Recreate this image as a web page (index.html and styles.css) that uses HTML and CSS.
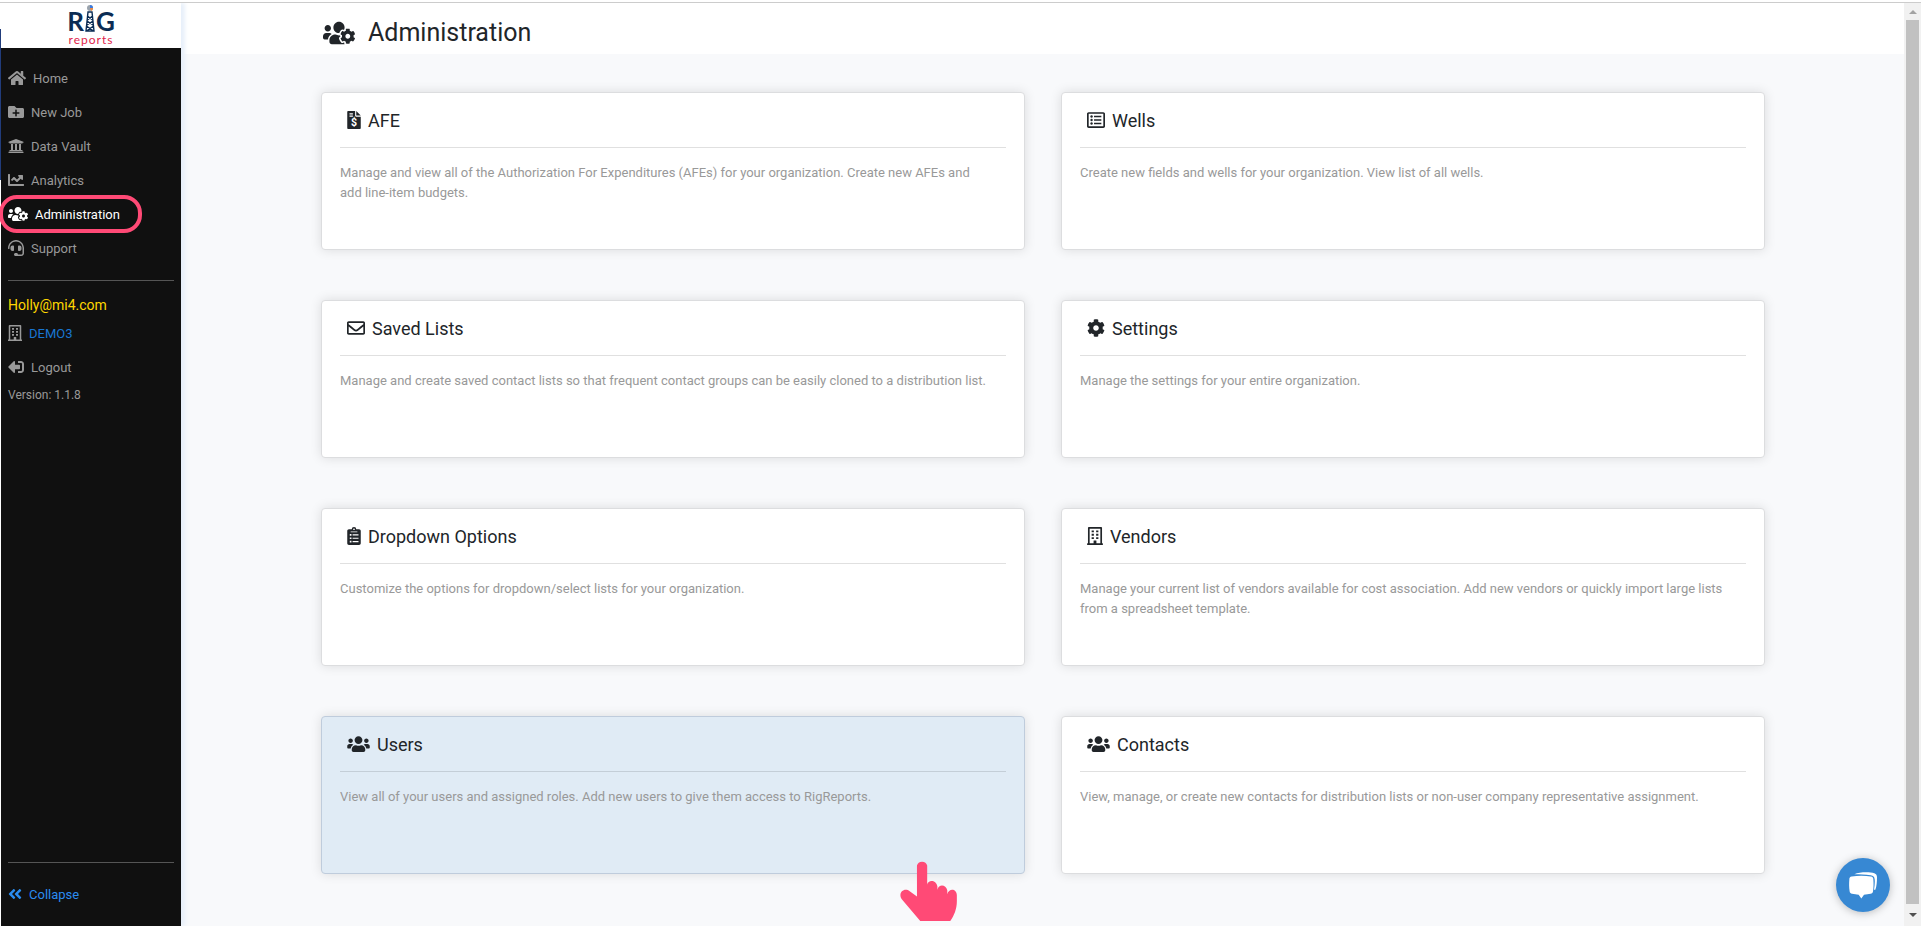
FILE: index.html
```
<!DOCTYPE html>
<html lang="en">
<head>
    <meta charset="UTF-8">
    <meta name="viewport" content="width=device-width, initial-scale=1.0">
    <title>Administration - Rig Reports</title>
    <link rel="stylesheet" href="styles.css">
</head>
<body>
    <!-- shared icons -->
    <svg class="sprite" aria-hidden="true">
        <symbol id="users-cog" viewBox="0 0 640 512">
            <path d="M610.5 341.3c2.6-14.1 2.6-28.5 0-42.6l25.8-14.9c3-1.7 4.3-5.2 3.3-8.5-6.7-21.6-18.2-41.2-33.2-57.4-2.3-2.5-6-3.1-9-1.4l-25.8 14.9c-10.9-9.3-23.4-16.5-36.9-21.3v-29.8c0-3.4-2.4-6.4-5.7-7.1-22.3-5-45-4.8-66.2 0-3.3.7-5.7 3.7-5.7 7.1v29.8c-13.5 4.8-26 12-36.9 21.3l-25.8-14.9c-2.9-1.7-6.7-1.1-9 1.4-15 16.2-26.5 35.8-33.2 57.4-1 3.3.4 6.8 3.3 8.5l25.8 14.9c-2.6 14.1-2.6 28.5 0 42.6l-25.8 14.9c-3 1.7-4.3 5.2-3.3 8.5 6.7 21.6 18.2 41.1 33.2 57.4 2.3 2.5 6 3.1 9 1.4l25.8-14.9c10.9 9.3 23.4 16.5 36.9 21.3v29.8c0 3.4 2.4 6.4 5.7 7.1 22.3 5 45 4.8 66.2 0 3.3-.7 5.7-3.7 5.7-7.1v-29.8c13.5-4.8 26-12 36.9-21.3l25.8 14.9c2.9 1.7 6.7 1.1 9-1.4 15-16.2 26.5-35.8 33.2-57.4 1-3.3-.4-6.8-3.3-8.5l-25.8-14.9zM496 368.5c-26.8 0-48.5-21.8-48.5-48.5s21.8-48.5 48.5-48.5 48.5 21.8 48.5 48.5-21.7 48.5-48.5 48.5zM96 224c35.3 0 64-28.7 64-64s-28.7-64-64-64-64 28.7-64 64 28.7 64 64 64zm224 32c1.9 0 3.7-.5 5.6-.6 8.3-21.7 20.5-42.1 36.3-59.2 7.4-8 17.9-12.6 28.9-12.6 6.9 0 13.7 1.8 19.6 5.3l7.9 4.6c.8-.5 1.6-.9 2.4-1.4 7-14.6 11.2-30.8 11.2-48 0-61.9-50.1-112-112-112S208 82.1 208 144c0 61.9 50.1 112 112 112zm105.2 194.5c-2.3-1.2-4.6-2.6-6.8-3.9-8.2 4.8-15.3 9.8-27.5 9.8-10.9 0-21.4-4.6-28.9-12.6-18.3-19.8-32.3-43.9-40.2-69.6-10.7-34.5 24.9-49.7 25.8-50.3-.1-2.6-.1-5.2 0-7.8l-7.9-4.6c-3.8-2.2-7-5-9.8-8.1-3.3.2-6.5.6-9.8.6-24.6 0-47.6-6-68.5-16h-8.3C179.6 288 128 339.6 128 403.2V432c0 26.5 21.5 48 48 48h255.4c-3.7-6-6.2-12.8-6.2-20.3v-9.2zM173.1 274.6C161.5 263.1 145.6 256 128 256H64c-35.3 0-64 28.7-64 64v32c0 17.7 14.3 32 32 32h65.9c6.3-47.4 34.9-87.3 75.2-109.4z"/>
        </symbol>
        <symbol id="users" viewBox="0 0 640 512">
            <path d="M96 224c35.3 0 64-28.7 64-64s-28.7-64-64-64-64 28.7-64 64 28.7 64 64 64zm448 0c35.3 0 64-28.7 64-64s-28.7-64-64-64-64 28.7-64 64 28.7 64 64 64zm32 32h-64c-17.6 0-33.5 7.1-45.1 18.6 40.3 22.1 68.9 62 75.1 109.4h66c17.7 0 32-14.3 32-32v-32c0-35.3-28.7-64-64-64zm-256 0c61.9 0 112-50.1 112-112S381.9 32 320 32 208 82.1 208 144s50.1 112 112 112zm76.8 32h-8.3c-20.8 10-43.9 16-68.5 16s-47.6-6-68.5-16h-8.3C179.6 288 128 339.6 128 403.2V432c0 26.5 21.5 48 48 48h288c26.5 0 48-21.5 48-48v-28.8c0-63.6-51.6-115.2-115.2-115.2zm-223.7-13.4C161.5 263.1 145.6 256 128 256H64c-35.3 0-64 28.7-64 64v32c0 17.7 14.3 32 32 32h65.9c6.3-47.4 34.9-87.3 75.2-109.4z"/>
        </symbol>
        <symbol id="building" viewBox="0 0 448 512">
            <path fill-rule="evenodd" d="M48 0h352c13 0 24 11 24 24v440h12c7 0 12 5 12 12v36H0v-36c0-7 5-12 12-12h12V24C24 11 35 0 48 0zM72 48v416h112v-68c0-7 5-12 12-12h56c7 0 12 5 12 12v68h112V48z"/>
            <path d="M128 96h64v56h-64zM256 96h64v56h-64zM128 192h64v56h-64zM256 192h64v56h-64zM128 288h64v56h-64zM256 288h64v56h-64z"/>
        </symbol>
    </svg>

    <nav class="sidebar">
        <a href="#" class="logo" aria-label="Rig Reports">
            <span class="logo-top">
                <span>R</span>
                <svg class="derrick" viewBox="0 0 10 28" width="10" height="28">
                    <circle cx="5" cy="3" r="3" fill="#9aa3ad"/>
                    <path d="M5 3V0a3 3 0 0 1 3 3z" fill="#3b7be0"/>
                    <path d="M5 3h3a3 3 0 0 1-2 3z" fill="#f08a3c"/>
                    <path d="M3 7h4l2 19H1zM2.500 11l5 4M7.500 11l-5 4M2 16l6 4M8 16l-6 4M1.500 21l7 5M8.500 21l-7 5" fill="none" stroke="#0b2c54" stroke-width="1.400"/>
                </svg>
                <span>G</span>
            </span>
            <span class="logo-bottom">reports</span>
        </a>

        <ul class="menu">
            <li><a href="#"><svg viewBox="0 0 576 512" width="18" height="16"><path d="M280.37 148.26L96 300.11V464a16 16 0 0 0 16 16l112.06-.29a16 16 0 0 0 15.92-16V368a16 16 0 0 1 16-16h64a16 16 0 0 1 16 16v95.64a16 16 0 0 0 16 16.05L464 480a16 16 0 0 0 16-16V300L295.67 148.26a12.19 12.19 0 0 0-15.3 0zM571.6 251.47L488 182.56V44.05a12 12 0 0 0-12-12h-56a12 12 0 0 0-12 12v72.61L318.47 43a48 48 0 0 0-61 0L4.34 251.47a12 12 0 0 0-1.6 16.9l25.5 31A12 12 0 0 0 45.15 301l235.22-193.74a12.19 12.19 0 0 1 15.3 0L530.9 301a12 12 0 0 0 16.9-1.6l25.5-31a12 12 0 0 0-1.7-16.93z"/></svg>Home</a></li>
            <li><a href="#"><svg viewBox="0 0 512 512" width="16" height="16"><path d="M464 128H272l-64-64H48C21.49 64 0 85.49 0 112v288c0 26.51 21.49 48 48 48h416c26.51 0 48-21.49 48-48V176c0-26.51-21.49-48-48-48zm-96 168c0 8.84-7.16 16-16 16h-72v72c0 8.84-7.16 16-16 16h-16c-8.84 0-16-7.16-16-16v-72h-72c-8.84 0-16-7.16-16-16v-16c0-8.84 7.16-16 16-16h72v-72c0-8.84 7.16-16 16-16h16c8.84 0 16 7.16 16 16v72h72c8.84 0 16 7.16 16 16v16z"/></svg>New Job</a></li>
            <li><a href="#"><svg viewBox="0 0 512 512" width="16" height="16"><path d="M496 128v16a8 8 0 0 1-8 8h-24v12c0 6.627-5.373 12-12 12H60c-6.627 0-12-5.373-12-12v-12H24a8 8 0 0 1-8-8v-16a8 8 0 0 1 4.941-7.392l232-88a7.996 7.996 0 0 1 6.118 0l232 88A8 8 0 0 1 496 128zm-24 304H40c-13.255 0-24 10.745-24 24v16a8 8 0 0 0 8 8h464a8 8 0 0 0 8-8v-16c0-13.255-10.745-24-24-24zM96 192v192H60c-6.627 0-12 5.373-12 12v20h416v-20c0-6.627-5.373-12-12-12h-36V192h-64v192h-64V192h-64v192h-64V192H96z"/></svg>Data Vault</a></li>
            <li><a href="#"><svg viewBox="0 0 512 512" width="16" height="16"><path d="M496 384H64V80c0-8.84-7.16-16-16-16H16C7.16 64 0 71.16 0 80v336c0 17.67 14.33 32 32 32h464c8.84 0 16-7.16 16-16v-32c0-8.84-7.16-16-16-16zM464 96H345.94c-21.38 0-32.09 25.85-16.97 40.97l32.4 32.4L288 242.75l-73.37-73.37c-12.5-12.5-32.76-12.5-45.25 0l-68.69 68.69c-6.25 6.25-6.25 16.38 0 22.63l22.62 22.62c6.25 6.25 16.38 6.25 22.63 0L192 237.25l73.37 73.37c12.5 12.5 32.76 12.5 45.25 0l96-96 32.4 32.4c15.12 15.12 40.97 4.41 40.97-16.97V112c.01-8.84-7.15-16-15.99-16z"/></svg>Analytics</a></li>
            <li class="active"><a href="#"><svg width="20" height="16"><use href="#users-cog"/></svg>Administration</a></li>
            <li><a href="#"><svg viewBox="0 0 512 512" width="16" height="16"><path d="M192 208c0-17.67-14.33-32-32-32h-16c-35.35 0-64 28.65-64 64v48c0 35.35 28.65 64 64 64h16c17.67 0 32-14.33 32-32V208zm176 144c35.35 0 64-28.65 64-64v-48c0-35.35-28.65-64-64-64h-16c-17.67 0-32 14.33-32 32v112c0 17.67 14.33 32 32 32h16zM256 0C113.18 0 4.58 118.83 0 256v16c0 8.84 7.16 16 16 16h16c8.84 0 16-7.16 16-16v-16c0-114.69 93.31-208 208-208s208 93.31 208 208h-.12c.08 2.43.12 165.72.12 165.72 0 23.35-18.93 42.28-42.28 42.28H320c0-26.51-21.49-48-48-48h-32c-26.51 0-48 21.49-48 48s21.49 48 48 48h181.72c49.86 0 90.28-40.42 90.28-90.28V256C507.42 118.83 398.82 0 256 0z"/></svg>Support</a></li>
        </ul>

        <div class="account">
            <p class="email">Holly@mi4.com</p>
            <a href="#" class="company"><svg width="14" height="16"><use href="#building"/></svg>DEMO3</a>
            <a href="#" class="logout"><svg viewBox="0 0 512 512" width="16" height="16"><path transform="matrix(-1 0 0 1 512 0)" d="M497 273L329 441c-15 15-41 4.500-41-17v-96H152c-13.300 0-24-10.700-24-24v-96c0-13.300 10.700-24 24-24h136V88c0-21.400 25.900-32 41-17l168 168c9.300 9.400 9.300 24.600 0 34zM192 436v-40c0-6.600-5.400-12-12-12H96c-17.700 0-32-14.300-32-32V160c0-17.700 14.300-32 32-32h84c6.600 0 12-5.400 12-12V76c0-6.600-5.400-12-12-12H96c-53 0-96 43-96 96v192c0 53 43 96 96 96h84c6.600 0 12-5.400 12-12z"/></svg>Logout</a>
            <p class="version">Version: 1.1.8</p>
        </div>

        <div class="sidebar-footer">
            <button type="button" class="collapse"><svg viewBox="0 0 448 512" width="14" height="16"><path d="M223.7 239l136-136c9.4-9.4 24.6-9.4 33.9 0l22.6 22.6c9.4 9.4 9.4 24.6 0 33.9L319.9 256l96.4 96.4c9.4 9.4 9.4 24.6 0 33.9L393.7 409c-9.4 9.4-24.6 9.4-33.9 0l-136-136c-9.5-9.4-9.5-24.6-.1-34zm-192 34l136 136c9.4 9.4 24.6 9.4 33.9 0l22.6-22.6c9.4-9.4 9.4-24.6 0-33.9L127.9 256l96.4-96.4c9.4-9.4 9.4-24.6 0-33.9L201.7 103c-9.4-9.4-24.6-9.4-33.9 0l-136 136c-9.5 9.4-9.5 24.6-.1 34z"/></svg>Collapse</button>
        </div>
    </nav>

    <main class="content">
        <header class="page-header">
            <svg width="32" height="26"><use href="#users-cog"/></svg>
            <h1>Administration</h1>
        </header>

        <div class="cards">
            <a href="#" class="card">
                <h2><svg viewBox="0 0 384 512" width="14" height="18"><path fill-rule="evenodd" d="M24 0h200v136c0 13 11 24 24 24h136v328c0 13-11 24-24 24H24c-13 0-24-11-24-24V24C0 11 11 0 24 0zM64 64v32h96V64zM64 128v32h96v-32z"/><path d="M256 0l128 128H256z"/><text class="dollar" x="192" y="440" text-anchor="middle">$</text></svg>AFE</h2>
                <p>Manage and view all of the Authorization For Expenditures (AFEs) for your organization. Create new AFEs and add line-item budgets.</p>
            </a>
            <a href="#" class="card">
                <h2><svg viewBox="0 0 512 512" width="18" height="18"><path fill-rule="evenodd" d="M48 32h416c26 0 48 22 48 48v352c0 26-22 48-48 48H48c-26 0-48-22-48-48V80c0-26 22-48 48-48zM48 80v352h416V80z"/><path d="M200 136h208v40H200zM200 236h208v40H200zM200 336h208v40H200z"/><circle cx="130" cy="156" r="34"/><circle cx="130" cy="256" r="34"/><circle cx="130" cy="356" r="34"/></svg>Wells</h2>
                <p>Create new fields and wells for your organization. View list of all wells.</p>
            </a>
            <a href="#" class="card">
                <h2><svg viewBox="0 0 512 512" width="18" height="18"><path d="M464 64H48C21.49 64 0 85.49 0 112v288c0 26.51 21.49 48 48 48h416c26.51 0 48-21.49 48-48V112c0-26.51-21.49-48-48-48zm0 48v40.805c-22.422 18.259-58.168 46.651-134.587 106.49-16.841 13.247-50.201 45.072-73.413 44.701-23.208.375-56.579-31.459-73.413-44.701C106.18 199.465 70.425 171.067 48 152.805V112h416zM48 400V214.398c22.914 18.251 55.409 43.862 104.938 82.646 21.857 17.205 60.134 55.186 103.062 54.955 42.717.231 80.509-37.199 103.053-54.947 49.528-38.783 82.032-64.401 104.947-82.653V400H48z"/></svg>Saved Lists</h2>
                <p>Manage and create saved contact lists so that frequent contact groups can be easily cloned to a distribution list.</p>
            </a>
            <a href="#" class="card">
                <h2><svg viewBox="0 0 512 512" width="18" height="18"><path d="M487.4 315.7l-42.6-24.6c4.3-23.2 4.3-47 0-70.2l42.6-24.6c4.9-2.8 7.1-8.6 5.5-14-11.1-35.6-30-67.8-54.7-94.6-3.8-4.1-10-5.1-14.8-2.3L380.8 110c-17.9-15.4-38.5-27.3-60.8-35.1V25.8c0-5.6-3.9-10.5-9.4-11.7-36.7-8.2-74.3-7.8-109.2 0-5.5 1.2-9.4 6.1-9.4 11.7V75c-22.2 7.9-42.8 19.8-60.8 35.1L88.700 85.500c-4.900-2.800-11-1.900-14.800 2.300-24.700 26.700-43.600 58.900-54.700 94.600-1.700 5.400.6 11.200 5.500 14L67.300 221c-4.300 23.200-4.300 47 0 70.200l-42.600 24.600c-4.900 2.800-7.100 8.600-5.500 14 11.100 35.600 30 67.800 54.700 94.600 3.800 4.100 10 5.100 14.800 2.300l42.600-24.600c17.900 15.400 38.500 27.300 60.800 35.100v49.200c0 5.600 3.900 10.500 9.400 11.700 36.700 8.200 74.300 7.800 109.200 0 5.500-1.200 9.400-6.100 9.400-11.700v-49.200c22.200-7.900 42.800-19.800 60.800-35.100l42.600 24.600c4.900 2.800 11 1.900 14.800-2.300 24.700-26.700 43.600-58.900 54.700-94.600 1.500-5.500-.7-11.300-5.600-14.100zM256 336c-44.100 0-80-35.900-80-80s35.900-80 80-80 80 35.900 80 80-35.900 80-80 80z"/></svg>Settings</h2>
                <p>Manage the settings for your entire organization.</p>
            </a>
            <a href="#" class="card">
                <h2><svg viewBox="0 0 384 512" width="14" height="18"><path fill-rule="evenodd" d="M48 64h80a64 64 0 0 1 128 0h80c26 0 48 22 48 48v352c0 26-22 48-48 48H48c-26 0-48-22-48-48V112c0-26 22-48 48-48zM192 40a24 24 0 1 0 0 48 24 24 0 0 0 0-48zM152 208v32h168v-32zM152 304v32h168v-32zM152 400v32h168v-32zM72 200v48h48v-48zM72 296v48h48v-48zM72 392v48h48v-48zM96 128v24h192v-24z"/></svg>Dropdown Options</h2>
                <p>Customize the options for dropdown/select lists for your organization.</p>
            </a>
            <a href="#" class="card">
                <h2><svg width="16" height="18"><use href="#building"/></svg>Vendors</h2>
                <p>Manage your current list of vendors available for cost association. Add new vendors or quickly import large lists from a spreadsheet template.</p>
            </a>
            <a href="#" class="card selected">
                <h2><svg width="23" height="18"><use href="#users"/></svg>Users</h2>
                <p>View all of your users and assigned roles. Add new users to give them access to RigReports.</p>
                <svg class="pointer" viewBox="0 0 172 185" width="57" height="61"><path d="M51 17a16 16 0 0 1 31 0v57c3-16 28-14 31 6v10c4-18 26-16 30 2v12c4-20 29-18 29 3v18c0 22-8 44-20 60H61L5 119C-8 100 12 82 29 95l22 16z"/></svg>
            </a>
            <a href="#" class="card">
                <h2><svg width="23" height="18"><use href="#users"/></svg>Contacts</h2>
                <p>View, manage, or create new contacts for distribution lists or non-user company representative assignment.</p>
            </a>
        </div>
    </main>

    <div class="scrollbar" aria-hidden="true">
        <span class="arrow up"></span>
        <span class="thumb"></span>
        <span class="arrow down"></span>
    </div>

    <button type="button" class="chat" aria-label="Open chat">
        <svg viewBox="0 0 84 80" width="28" height="27">
            <path d="M16 6C32-1 62-1 76 3c6 2 8 6 8 12 0 14-1 26-5 38l-4 0c2-12 3-22 2-32-1-8-4-11-12-12C48 6 34 6 16 6z"/>
            <path d="M8 13c18-3 40-3 58 0 5 1 7 4 7 9 1 12 1 24-1 36-1 4-3 6-7 7l-20 3-8 11-8-11-20-3c-4-1-6-3-7-7-2-12-2-24-1-36 0-5 2-8 7-9z"/>
        </svg>
    </button>
</body>
</html>
```
FILE: styles.css
```
* {
    margin: 0;
    padding: 0;
    box-sizing: border-box;
}

html {
    background: #fff;
    padding-top: 2px;
}

body {
    display: flex;
    height: calc(100vh - 2px);
    padding-left: 1px;
    border-top: 1px solid #ccc;
    background: linear-gradient(#1f3a7a, #1f3a7a) 0 26px / 1px 151px no-repeat,
                linear-gradient(#fff, #fff) 0 0 / 1px 100% no-repeat,
                #f8f9fb;
    color: #212529;
    font-family: Roboto, sans-serif;
    font-size: 13px;
    overflow: hidden;
}

a {
    color: inherit;
    text-decoration: none;
}

svg {
    fill: currentColor;
    flex-shrink: 0;
}

.sprite {
    position: absolute;
    width: 0;
    height: 0;
}

/* sidebar */
.sidebar {
    position: relative;
    z-index: 1;
    display: flex;
    flex-direction: column;
    width: 180px;
    background: #101010;
    color: #999;
    box-shadow: 4px 0 4px #e8f0fa;
}

.logo {
    display: flex;
    flex-direction: column;
    align-items: center;
    height: 45px;
    padding-top: 2px;
    background: #fff;
    font-family: Lato, sans-serif;
}

.logo-top {
    display: flex;
    gap: 1px;
    height: 28px;
    color: #0b2c54;
    font-size: 26px;
    font-weight: 700;
    line-height: 32px;
}

.logo-bottom {
    color: #e0244a;
    font-size: 12px;
    line-height: 14px;
    letter-spacing: 1px;
}

.menu {
    list-style: none;
    padding: 13px 7px 15px;
}

.menu a,
.company,
.logout,
.collapse {
    display: flex;
    align-items: center;
    gap: 7px;
    height: 34px;
}

.menu .active {
    position: relative;
    color: #fff;
}

/* highlight ring round the current item */
.menu .active::after {
    content: '';
    position: absolute;
    top: -2px;
    left: -9px;
    width: 143px;
    height: 38px;
    box-sizing: border-box;
    border: 4px solid #ff4a76;
    border-radius: 18px;
}

.account,
.sidebar-footer {
    margin: 0 7px;
    border-top: 1px solid #555;
}

.account {
    padding-top: 13px;
}

.email {
    color: #ffd600;
    font-size: 14px;
    line-height: 22px;
}

.company {
    color: #1976d2;
}

.company svg {
    color: #999;
}

.version {
    font-size: 12px;
    line-height: 22px;
}

.sidebar-footer {
    margin-top: auto;
    padding: 14px 0 15px;
}

.collapse {
    background: none;
    border: 0;
    color: #2a8cf0;
    font: inherit;
    cursor: pointer;
}

/* main area */
.content {
    flex: 1;
    overflow: hidden;
}

.page-header {
    display: flex;
    align-items: center;
    gap: 13px;
    height: 51px;
    padding: 8px 142px 0;
    background: #fff;
}

h1 {
    font-size: 25px;
    font-weight: 400;
    line-height: 32px;
}

.cards {
    display: grid;
    grid-template-columns: 1fr 1fr;
    gap: 50px 36px;
    padding: 38px 139px 50px 140px;
}

.card {
    position: relative;
    min-height: 158px;
    padding: 0 18px;
    background: #fff;
    border: 1px solid #dcdddf;
    border-radius: 4px;
    box-shadow: 0 0 12px rgba(0, 0, 0, 0.12);
}

.card.selected,
.card:hover {
    background: #e0ebf5;
    border-color: #bfccdc;
}

.card h2 {
    display: flex;
    align-items: center;
    gap: 7px;
    height: 55px;
    padding-left: 7px;
    border-bottom: 1px solid rgba(0, 0, 0, 0.12);
    font-size: 18px;
    font-weight: 400;
}

.card p {
    margin-top: 15px;
    padding-right: 16px;
    color: #999;
    line-height: 20px;
}

.dollar {
    fill: #fff;
    font-size: 300px;
    font-weight: 700;
}

.pointer {
    position: absolute;
    right: 67px;
    bottom: -48px;
    color: #ff4a76;
}

/* scrollbar */
.scrollbar {
    display: flex;
    flex-direction: column;
    align-items: center;
    width: 17px;
    background: #f1f1f1;
}

.thumb {
    flex: 1;
    width: 13px;
    background: #c1c1c1;
}

.arrow {
    display: flex;
    align-items: center;
    justify-content: center;
    height: 17px;
}

.arrow::before {
    content: '';
    border: 4px solid transparent;
}

.arrow.up::before {
    border-top: 0;
    border-bottom-color: #a3a3a3;
}

.arrow.down {
    height: 22px;
}

.arrow.down::before {
    border-bottom: 0;
    border-top-color: #505050;
}

/* chat button */
.chat {
    position: fixed;
    right: 31px;
    bottom: 14px;
    z-index: 2;
    display: flex;
    align-items: center;
    justify-content: center;
    width: 54px;
    height: 54px;
    border: 0;
    border-radius: 50%;
    background: #3788d3;
    color: #fff;
    box-shadow: 0 1px 8px rgba(0, 0, 0, 0.25);
    cursor: pointer;
}
```
